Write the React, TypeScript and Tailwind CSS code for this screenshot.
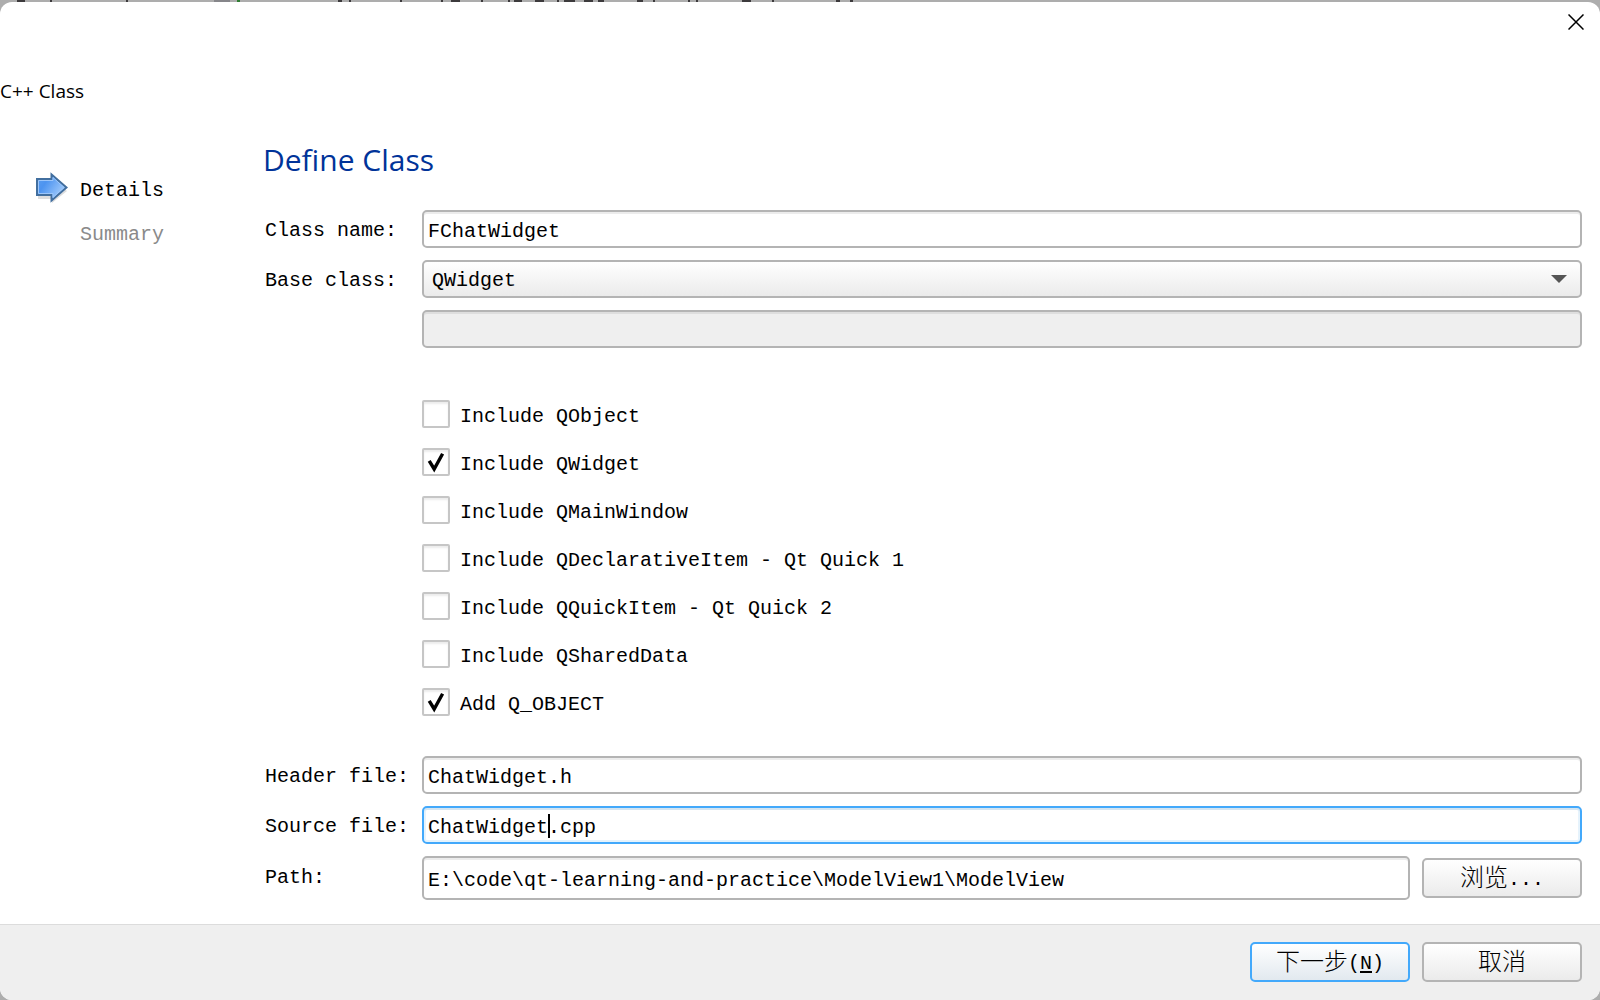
import React, { useState } from 'react';

const stripMarks = [
  [17, 8], [50, 2], [126, 2], [338, 4], [349, 2], [400, 2], [441, 2], [451, 9], [481, 2],
  [508, 2], [514, 8], [535, 9], [557, 2], [564, 11], [584, 9], [598, 6], [637, 6], [653, 2],
  [688, 2], [696, 2], [742, 9], [772, 2], [836, 4], [850, 3],
];

const field =
  'w-full min-w-0 rounded-[5px] border-2 border-[#b4b4b4] bg-white pl-1 pr-2 pt-1 text-black outline-none shadow-[inset_0_2px_0_#ececec]';
const button =
  'flex h-10 w-40 shrink-0 items-center justify-center rounded-[5px] border-2 bg-linear-to-b pt-1 text-xl text-black';

function Hanzi({ children }: { children: React.ReactNode }) {
  return <span className="text-2xl leading-8 font-light">{children}</span>;
}

function Arrow() {
  return (
    <svg className="h-8 w-8 shrink-0" viewBox="0 0 32 32" aria-hidden="true">
      <defs>
        <linearGradient id="arrow" x1="0" y1="0" x2="1" y2="0.6">
          <stop offset="0" stopColor="#5c9ff2" />
          <stop offset="0.35" stopColor="#4d94f0" />
          <stop offset="1" stopColor="#a8cffc" />
        </linearGradient>
      </defs>
      <path d="M2 12H16V6L31 19L16 31V27H2Z" fill="#dedede" />
      <path d="M1 7H15.500V2.500L30.500 15.500L15.500 28.500V23H1Z" fill="url(#arrow)" stroke="#426f9f" strokeWidth="2" />
      <path d="M2.500 8.500H17V5.500L28 15.500L17 25.500V21.500H2.500Z" fill="none" stroke="#9cc6fa" strokeWidth="1" />
    </svg>
  );
}

function Check({ label, on }: { label: string; on?: boolean }) {
  const [checked, setChecked] = useState(!!on);
  return (
    <label className="flex h-7 items-center gap-[10px]">
      <span className="relative h-7 w-7 shrink-0">
        <input
          type="checkbox"
          checked={checked}
          onChange={(e) => setChecked(e.target.checked)}
          className="block h-7 w-7 appearance-none rounded-[2px] border-2 border-[#c6c6c6] bg-white shadow-[inset_0_2px_2px_#ececec]"
        />
        {checked && (
          <svg className="pointer-events-none absolute inset-0" viewBox="0 0 28 28" aria-hidden="true">
            <path d="M7.200 12.800L12.200 21L20.600 5.800" fill="none" stroke="#000" strokeWidth="3.400" />
          </svg>
        )}
      </span>
      <span className="pt-[5px]">{label}</span>
    </label>
  );
}

export default function App() {
  return (
    <div className="flex min-h-screen flex-col bg-[#adadad] font-['Liberation_Mono','Noto_Sans_CJK_SC',monospace] text-xl leading-6 text-black">
      <div className="h-[2px] overflow-hidden">
        <svg width="1600" height="2" aria-hidden="true" className="block max-w-none">
          {stripMarks.map(([x, w]) => (
            <rect key={x} x={x} width={w} height="2" fill="#3c3a3c" />
          ))}
          <rect x="214" width="16" height="2" fill="#86868a" />
          <rect x="237" width="3" height="2" fill="#2f7d32" />
        </svg>
      </div>
      <main className="flex grow flex-col overflow-hidden rounded-xl bg-white">
        <header className="flex flex-col">
          <button type="button" aria-label="Close" className="mr-3 mt-2 flex h-6 w-6 items-center justify-center self-end">
            <svg width="16" height="16" viewBox="0 0 16 16" aria-hidden="true">
              <path d="M0.500 0.500L15.500 15.500M15.500 0.500L0.500 15.500" stroke="#000" strokeWidth="1.500" />
            </svg>
          </button>
          <div className="mt-[45px] font-['Open_Sans',sans-serif] text-[19px] leading-6">C++ Class</div>
        </header>

        <div className="flex grow pr-[18px]">
          <nav className="w-[264px] shrink-0 pl-9 pt-[69px]">
            <ol className="flex flex-col gap-3">
              <li className="flex h-8 items-center gap-3">
                <Arrow />
                <span className="pt-[5px]">Details</span>
              </li>
              <li className="flex h-8 items-center pl-11 text-[#8a8a8a]">
                <span className="pt-[5px]">Summary</span>
              </li>
            </ol>
          </nav>

          <form className="flex min-w-0 grow flex-col pb-6" onSubmit={(e) => e.preventDefault()}>
            <h1 className="-ml-px mt-[37px] font-['Open_Sans',sans-serif] text-[30px] leading-10 text-[#003399]">Define Class</h1>

            <div className="mt-[30px] grid grid-cols-[158px_minmax(0,1fr)] items-center gap-y-3">
              <label htmlFor="cls" className="pl-px pt-1">Class name:</label>
              <input id="cls" defaultValue="FChatWidget" className={`${field} h-[38px]`} />
              <label htmlFor="base" className="pl-px pt-1">Base class:</label>
              <div className="relative">
                <select
                  id="base"
                  className="block h-[38px] w-full appearance-none rounded-[5px] border-2 border-[#b4b4b4] bg-linear-to-b from-white to-[#ebebeb] pl-2 pt-1 text-black outline-none"
                >
                  <option>QWidget</option>
                </select>
                <svg className="pointer-events-none absolute right-[15px] top-[15px]" width="16" height="8" viewBox="0 0 16 8" aria-hidden="true">
                  <path d="M0 0H16L8 8Z" fill="#555" />
                </svg>
              </div>
              <span />
              <input
                disabled
                aria-label="Custom base class"
                className="h-[38px] w-full rounded-[5px] border-2 border-[#b4b4b4] bg-[#efefef] shadow-[inset_0_2px_0_#dedede]"
              />
            </div>

            <div className="ml-[158px] mt-[52px] flex flex-col gap-5">
              <Check label="Include QObject" />
              <Check label="Include QWidget" on />
              <Check label="Include QMainWindow" />
              <Check label="Include QDeclarativeItem - Qt Quick 1" />
              <Check label="Include QQuickItem - Qt Quick 2" />
              <Check label="Include QSharedData" />
              <Check label="Add Q_OBJECT" on />
            </div>

            <div className="mt-10 grid grid-cols-[158px_minmax(0,1fr)] items-center gap-y-3">
              <label htmlFor="header" className="pl-px pt-1">Header file:</label>
              <input id="header" defaultValue="ChatWidget.h" className={`${field} h-[38px]`} />
              <label htmlFor="source" className="pl-px pt-1">Source file:</label>
              <div className="relative">
                <input
                  id="source"
                  defaultValue="ChatWidget.cpp"
                  className="block h-[38px] w-full rounded-[5px] border-2 border-[#43a9fb] bg-white pl-1 pt-1 outline-none shadow-[inset_0_2px_0_#d5e5f1,inset_0_0_0_2px_#e6f3fc]"
                />
                <span className="absolute left-[126px] top-2 h-6 w-[2px] bg-black" />
              </div>
              <label htmlFor="path" className="pl-px">Path:</label>
              <div className="flex items-center gap-3">
                <input id="path" defaultValue="E:\code\qt-learning-and-practice\ModelView1\ModelView" className={`${field} h-11`} />
                <button type="button" className={`${button} border-[#b4b4b4] from-white to-[#ebebeb]`}>
                  <Hanzi>浏览</Hanzi>...
                </button>
              </div>
            </div>
          </form>
        </div>

        <footer className="flex justify-end gap-3 border-t border-[#dcdcdc] bg-[#efefef] pb-[18px] pr-[18px] pt-[17px]">
          <button type="submit" className={`${button} border-[#43a9fb] from-white to-[#e2e9ef]`}>
            <Hanzi>下一步</Hanzi>(<u className="underline decoration-2 underline-offset-2">N</u>)
          </button>
          <button type="button" className={`${button} border-[#b4b4b4] from-white to-[#ebebeb]`}>
            <Hanzi>取消</Hanzi>
          </button>
        </footer>
      </main>
    </div>
  );
}
